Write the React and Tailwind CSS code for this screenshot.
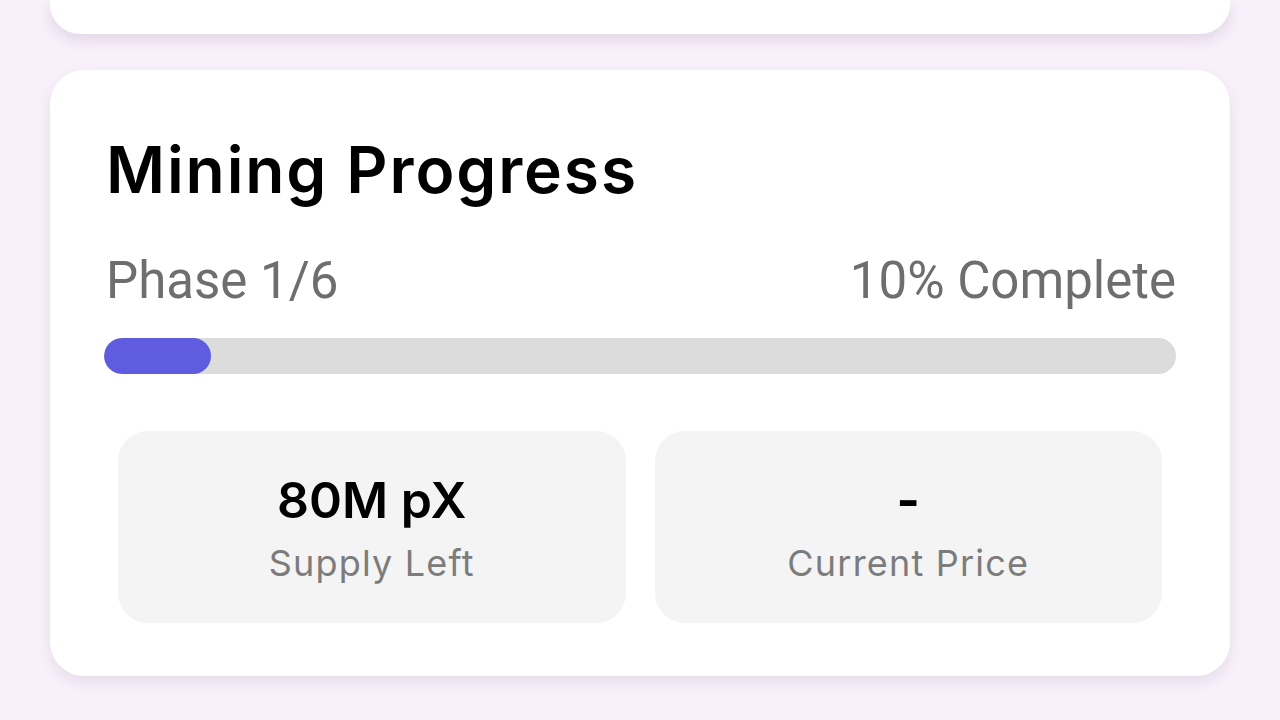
export default function App() {
  return (
    <div className="min-h-[720px] w-[1280px] bg-[#f8f0fa] overflow-hidden">
      <div className="mx-[50px] h-[34px] rounded-b-[30px] bg-white shadow-[0_6px_14px_rgba(110,80,130,0.16)]" />
      <div className="mx-[50px] mt-[36px] h-[606px] rounded-[34px] bg-white shadow-[0_6px_14px_rgba(110,80,130,0.12)] px-[54px] pt-[68px]">
        <h2 className="ml-[2px] font-['Inter',sans-serif] font-semibold text-[64px] leading-[64px] tracking-[1.9px] text-black">
          Mining Progress
        </h2>
        <div className="mt-[49px] flex justify-between font-['Roboto',sans-serif] text-[51px] leading-[60px] text-[#6e6e6e]">
          <span className="ml-[2px]">Phase 1/6</span>
          <span>10% Complete</span>
        </div>
        <div className="mt-[27px] h-[36px] rounded-full bg-[#dcdcdc] overflow-hidden">
          <div className="h-full rounded-full bg-[#5f5ce0]" style={{ width: "10%" }} />
        </div>
        <div className="mt-[57px] mx-[14px] grid grid-cols-2 gap-[29px]">
          <div className="h-[192px] rounded-[30px] bg-[#f4f4f4] flex flex-col items-center pt-[41px]">
            <div className="font-['Inter',sans-serif] font-semibold text-[50px] leading-[56px] text-black">80M pX</div>
            <div className="mt-[14px] font-['Inter',sans-serif] text-[36px] leading-[42px] text-[#7c7c7c] tracking-[1.2px]">Supply Left</div>
          </div>
          <div className="h-[192px] rounded-[30px] bg-[#f4f4f4] flex flex-col items-center pt-[41px]">
            <div className="font-['Inter',sans-serif] font-bold text-[50px] leading-[56px] text-black">-</div>
            <div className="mt-[14px] font-['Inter',sans-serif] text-[36px] leading-[42px] text-[#7c7c7c] tracking-[1.2px]">Current Price</div>
          </div>
        </div>
      </div>
    </div>
  );
}
